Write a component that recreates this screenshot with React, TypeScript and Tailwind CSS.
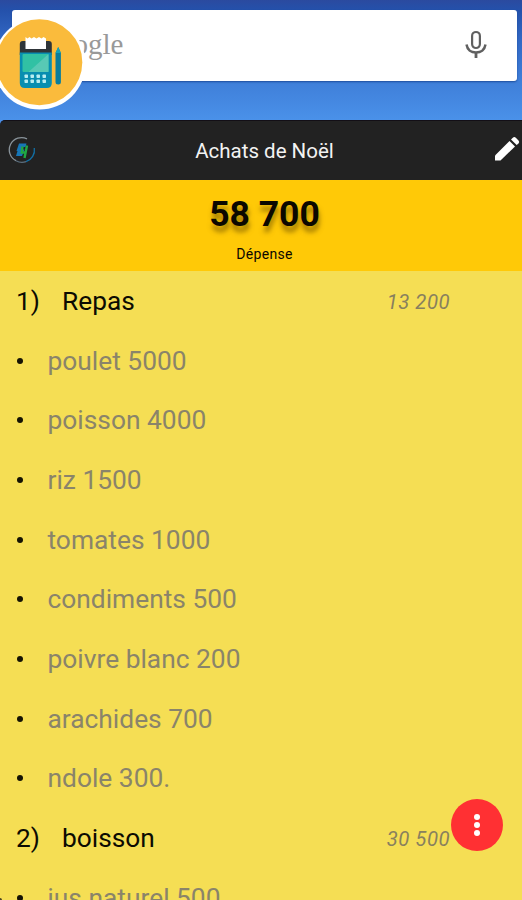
type Line = { kind: "section"; index: string; label: string; total: string } | { kind: "item"; label: string };

const lines: Line[] = [
  { kind: "section", index: "1)", label: "Repas", total: "13 200" },
  { kind: "item", label: "poulet 5000" },
  { kind: "item", label: "poisson 4000" },
  { kind: "item", label: "riz 1500" },
  { kind: "item", label: "tomates 1000" },
  { kind: "item", label: "condiments 500" },
  { kind: "item", label: "poivre blanc 200" },
  { kind: "item", label: "arachides 700" },
  { kind: "item", label: "ndole 300." },
  { kind: "section", index: "2)", label: "boisson", total: "30 500" },
  { kind: "item", label: "jus naturel 500" },
];

function Mic() {
  return (
    <svg className="mb-[2px] h-[29px] w-[22px]" viewBox="0 0 22 29" fill="none" stroke="#606060">
      <rect x="7.1" y="2" width="7.8" height="16" rx="3.9" strokeWidth="2.200" />
      <path d="M1.500 14.500C2.300 19.500 6 22.600 11 22.600S19.700 19.500 20.500 14.500" strokeWidth="2.500" />
      <path d="M11 22v6" strokeWidth="2.800" />
    </svg>
  );
}

function Bubble() {
  return (
    <svg className="absolute -left-[5px] top-[15px] h-[97px] w-[92px]" viewBox="-5 15 92 97">
      <circle cx="39.500" cy="63.600" r="46" fill="#fff" />
      <circle cx="39.300" cy="62.300" r="43" fill="#fabb3c" />
      <path d="M19.800 44q0-3 3-3h26q3 0 3 3v11h-32z" fill="#2e3438" />
      <path d="M25.500 37l2 1.500 2-1.500 2 1.500 2.500-1.500 2.500 1.500 2.500-1.500 2.500 1.500 2-1.500 2.500 1.500V49h-20.500z" fill="#fff" />
      <path d="M19.800 52.500h32v30.500q0 5-5 5h-22q-5 0-5-5z" fill="#088eb0" />
      <rect x="22.500" y="54" width="26" height="18" rx="1" fill="#31c1a4" />
      <path d="M48.500 54v18h-20z" fill="#58c9b5" />
      <g fill="#b9edf1">
        {[24.5, 30.5, 36.5, 42.5].map((x) => (
          <g key={x}>
            <rect x={x} y="74.500" width="3.500" height="3.500" rx=".7" />
            <rect x={x} y="79.500" width="3.500" height="3.500" rx=".7" />
          </g>
        ))}
      </g>
      <path d="M55.500 53l2.700-6 2.700 6v29q0 2.500-2.700 2.500t-2.700-2.500z" fill="#087d9c" />
      <path d="M55.500 53l2.700-6 2.700 6z" fill="#15a3b8" />
    </svg>
  );
}

function Logo() {
  return (
    <svg className="-mt-[1px] h-[28px] w-[28px]" viewBox="0 0 28 28" fill="none">
      <path d="M19 2.900A12.200 12.200 0 0 0 8 24.700" stroke="#89939a" strokeWidth="1.300" />
      <path d="M8 24.700A12.200 12.200 0 0 0 18 25.600" stroke="#5d7080" strokeWidth="1.200" />
      <path d="M18 25.600A12.200 12.200 0 0 0 26.300 12" stroke="#126fa5" strokeWidth="1.300" />
      <path d="M11 7.500h7.500l-1 3.500h-3.500l-.5 2.500h3l-2.500 6.500H8l1.500-5h-1z" fill="#1676b7" />
      <path d="M14.500 10.500l-.8 6h4.800M19 9.500l-2.500 12.500" stroke="#20a744" strokeWidth="2.400" />
    </svg>
  );
}

function Row({ line }: { line: Line }) {
  if (line.kind === "section") {
    return (
      <li className="flex h-[59.7px] shrink-0 items-center pl-[16px] pr-[72px] text-[26.3px] text-[#0c0b02]">
        <span className="w-[46px] pt-[2px]">{line.index}</span>
        <span className="grow pt-[2px]">{line.label}</span>
        <span className="pt-[2px] text-[20.3px] italic tracking-[0.5px] text-[#88805e]">{line.total}</span>
      </li>
    );
  }
  return (
    <li className="flex h-[59.7px] shrink-0 items-center pl-[17px] text-[26.35px] text-[#8a846a]">
      <span className="mr-[24.5px] size-[6px] rounded-full bg-[#151303]" />
      <span className="pt-[1.5px]">{line.label}</span>
    </li>
  );
}

export default function App() {
  return (
    <div className="relative flex h-[900px] w-[522px] flex-col overflow-hidden bg-[#4b90e8] font-['Roboto','Liberation_Sans',sans-serif]">
      <div className="h-[120px] shrink-0 bg-[linear-gradient(180deg,#2b4a9f_0px,#2451ab_10px,#3268c4_40px,#3f7fd9_82px,#4a91e9_120px)] pl-[12px] pr-[5px] pt-[10px]">
        <div className="flex h-[71px] items-center justify-between rounded-[3px] bg-white pl-[26px] pr-[30px] shadow-[0_1px_2px_#1d4d9b]">
          <span className="pb-px font-['Liberation_Serif',serif] text-[29px] text-[#999]">Google</span>
          <Mic />
        </div>
      </div>

      <header className="grid h-[59.5px] shrink-0 grid-cols-[60px_1fr_60px] items-center rounded-tl-[5px] border-t border-[#130f16] bg-[#222]">
        <span className="pl-[8px]">
          <Logo />
        </span>
        <h1 className="pl-[7px] pt-[3px] text-center text-[20.5px] text-[#f3f3f3]">Achats de Noël</h1>
        <svg className="-mt-[2px] ml-auto h-[28px] w-[30px]" viewBox="0 0 30 28">
          <path d="M3 20.500L17.500 6l5.500 5.500L8.500 25.500H3z" fill="#fff" />
          <path d="M19 4.500l1.800-1.800q1.500-1.500 3 0l2.700 2.700q1.500 1.500 0 3L24.700 10z" fill="#fff" />
        </svg>
      </header>

      <section className="flex h-[91.5px] shrink-0 flex-col items-center bg-[#ffc907] pl-[7px] text-[#0b0800]">
        <strong className="mt-[13px] text-[35.5px] leading-[42px] font-bold [text-shadow:1px_6px_5px_#876500cc]">58 700</strong>
        <span className="mt-[10px] text-[14px] leading-[18px] tracking-[0.3px]">Dépense</span>
      </section>

      <ul className="flex min-h-0 grow flex-col overflow-hidden bg-[#f5de54]">
        {lines.map((line) => (
          <Row key={line.label} line={line} />
        ))}
      </ul>

      <Bubble />
      <span className="absolute -left-[2px] top-[898px] size-[4px] rounded-full bg-[#4b4420]" />
      <button className="absolute left-[451px] top-[799px] flex size-[52px] flex-col items-center justify-center gap-[2px] rounded-full bg-[#ff3033]" aria-label="Menu">
        <span className="size-[6px] rounded-full bg-white" />
        <span className="size-[6px] rounded-full bg-white" />
        <span className="size-[6px] rounded-full bg-white" />
      </button>
    </div>
  );
}
